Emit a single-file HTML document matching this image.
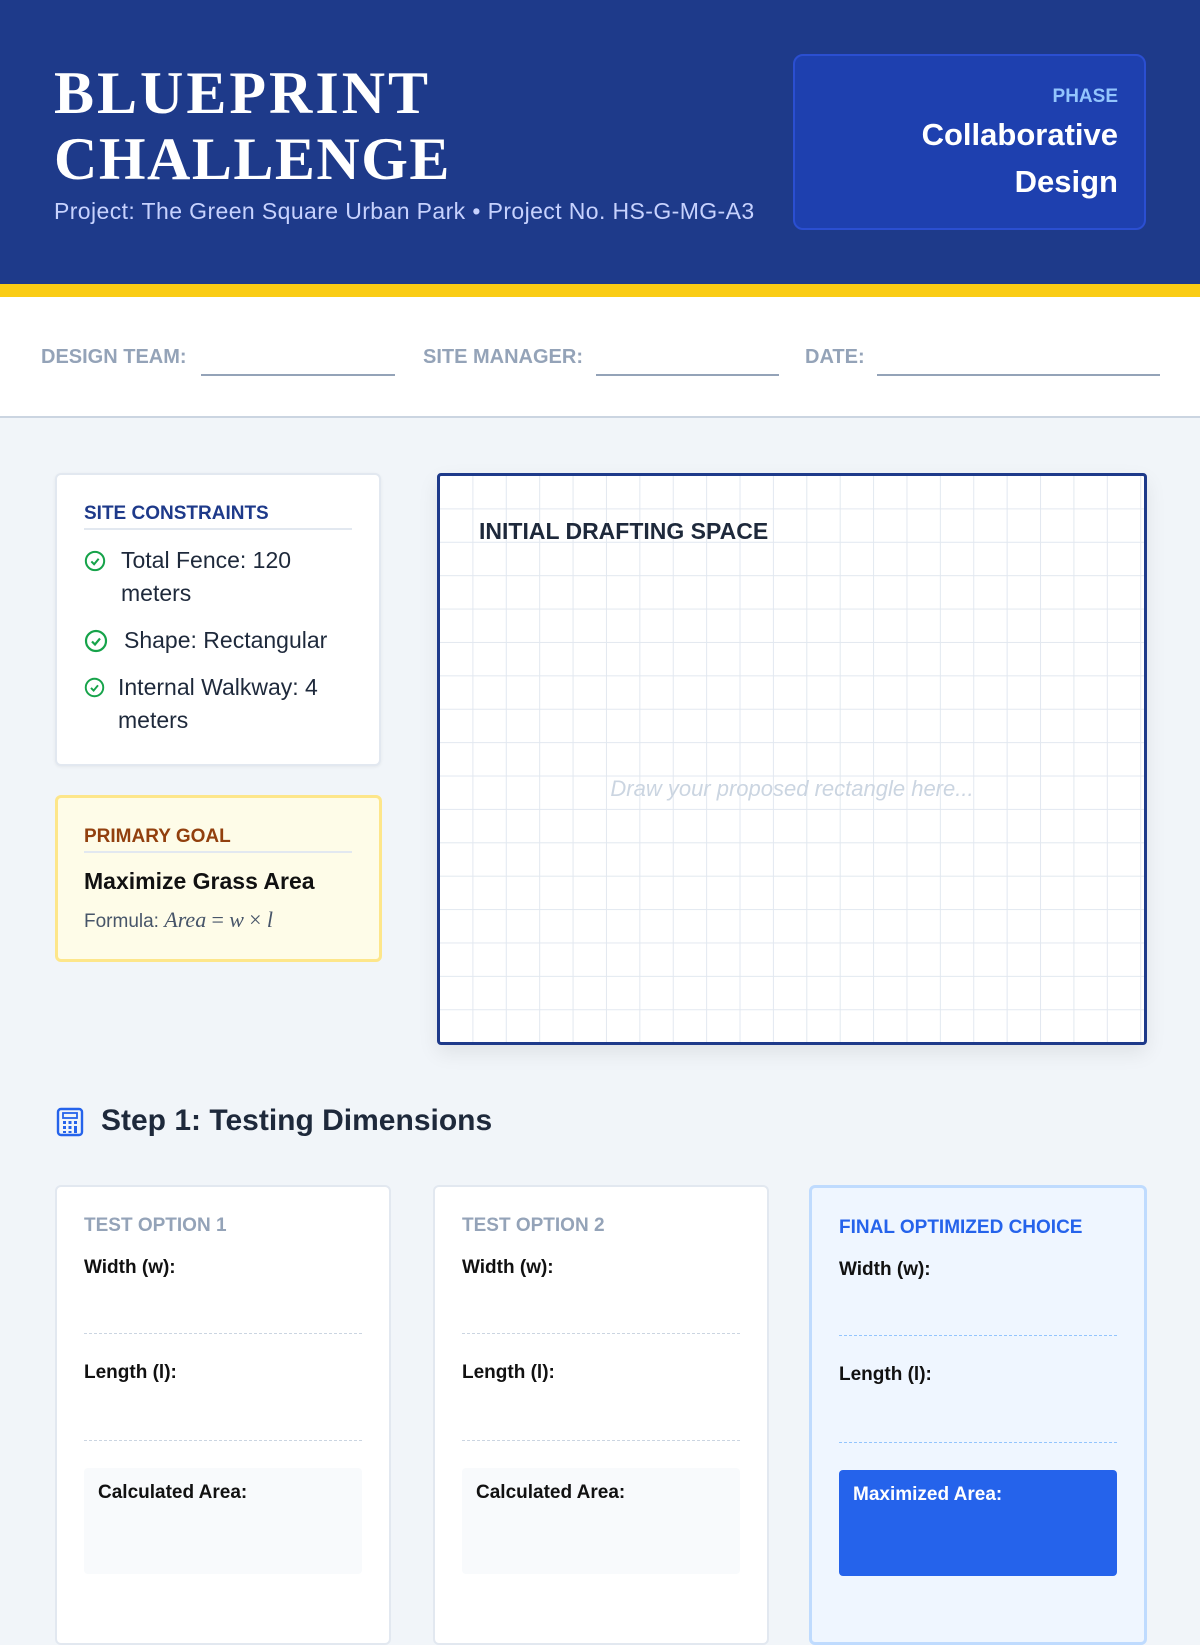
<!DOCTYPE html>
<html><head><meta charset="utf-8"><style>
*{margin:0;padding:0;box-sizing:border-box}
body{width:1200px;height:1600px;overflow:hidden;background:#f1f5f9;font-family:"Liberation Sans",sans-serif;position:relative}
.a{position:absolute}
.hdr{left:0;top:0;width:1200px;height:284px;background:#1e3a8a}
.band{left:0;top:284px;width:1200px;height:13px;background:#facc15}
.info{left:0;top:297px;width:1200px;height:121px;background:#fff;border-bottom:2px solid #cbd5e1}
.lbl{font-size:20px;font-weight:bold;color:#94a3b8;top:346px}
.ln{height:2px;background:#94a3b8;top:374px}
.card{background:#fff;border:2px solid #e2e8f0;border-radius:6px}
.h{font-size:19px;font-weight:bold}
.it{font-size:23px;color:#1e293b;line-height:33px}
.tc{width:336px;height:460px;top:1185px;background:#fff;border:2px solid #e2e8f0;border-radius:6px}
.tc .t{position:absolute;left:27px;top:28px;font-size:19px;font-weight:bold;color:#94a3b8}
.tc .w{position:absolute;left:27px;font-size:19px;font-weight:bold;color:#111}
.tc .d{position:absolute;left:27px;right:27px;border-top:1.5px dashed #cbd5e1}
.tc .box{position:absolute;left:27px;right:27px;top:281px;height:106px;background:#f8fafc;border-radius:4px;padding:14px 14px;font-size:19px;font-weight:bold;color:#111}
</style></head><body>
<div class="a hdr"></div>
<div class="a" style="left:54px;top:60px;font-family:'Liberation Serif',serif;font-weight:bold;font-size:60px;line-height:66px;letter-spacing:3px;color:#fff">BLUEPRINT<br><span style="letter-spacing:1.5px">CHALLENGE</span></div>
<div class="a" style="left:54px;top:198px;font-size:23px;letter-spacing:0.4px;color:#c7d2fe">Project: The Green Square Urban Park • Project No. HS-G-MG-A3</div>
<div class="a" style="left:793px;top:54px;width:353px;height:176px;background:#1e40af;border:2px solid #2b4fd1;border-radius:10px;text-align:right;padding:30px 26px 0 0">
<div style="font-size:19px;font-weight:bold;color:#93c5fd">PHASE</div>
<div style="font-size:31px;font-weight:bold;color:#fff;line-height:47px;margin-top:3px">Collaborative<br>Design</div>
</div>
<div class="a band"></div>
<div class="a info"></div>
<div class="a lbl" style="left:41px">DESIGN TEAM:</div><div class="a ln" style="left:201px;width:194px"></div>
<div class="a lbl" style="left:423px">SITE MANAGER:</div><div class="a ln" style="left:596px;width:183px"></div>
<div class="a lbl" style="left:805px">DATE:</div><div class="a ln" style="left:877px;width:283px"></div>

<div class="a card" style="left:55px;top:473px;width:326px;height:293px;box-shadow:0 1px 3px rgba(0,0,0,.06)"></div>
<div class="a h" style="left:84px;top:503px;color:#1e3a8a">SITE CONSTRAINTS</div>
<div class="a" style="left:84px;top:528px;width:268px;height:2px;background:#e2e8f0"></div>
<svg class="a" style="left:84px;top:550px" width="22" height="22" viewBox="0 0 24 24" fill="none" stroke="#16a34a" stroke-width="2.2"><circle cx="12" cy="12" r="10"/><path d="M8 12.5l3 3 5-6"/></svg>
<div class="a it" style="left:121px;top:544px">Total Fence: 120<br>meters</div>
<svg class="a" style="left:84px;top:629px" width="24" height="24" viewBox="0 0 24 24" fill="none" stroke="#16a34a" stroke-width="2.2"><circle cx="12" cy="12" r="10"/><path d="M8 12.5l3 3 5-6"/></svg>
<div class="a it" style="left:124px;top:624px">Shape: Rectangular</div>
<svg class="a" style="left:84px;top:677px" width="21" height="21" viewBox="0 0 24 24" fill="none" stroke="#16a34a" stroke-width="2.2"><circle cx="12" cy="12" r="10"/><path d="M8 12.5l3 3 5-6"/></svg>
<div class="a it" style="left:118px;top:671px">Internal Walkway: 4<br>meters</div>

<div class="a" style="left:55px;top:795px;width:327px;height:167px;background:#fefce8;border:3px solid #fde68a;border-radius:6px"></div>
<div class="a h" style="left:84px;top:826px;color:#92400e">PRIMARY GOAL</div>
<div class="a" style="left:84px;top:851px;width:268px;height:2px;background:#e2e8f0"></div>
<div class="a" style="left:84px;top:868px;font-size:23px;font-weight:bold;color:#111">Maximize Grass Area</div>
<div class="a" style="left:84px;top:907px;font-size:19px;color:#475569">Formula: <span style="font-family:'Liberation Serif',serif;font-style:italic;font-size:22px">Area</span> <span style="font-family:'Liberation Serif',serif;font-size:22px">=</span> <span style="font-family:'Liberation Serif',serif;font-style:italic;font-size:22px">w</span> <span style="font-family:'Liberation Serif',serif;font-size:22px">×</span> <span style="font-family:'Liberation Serif',serif;font-style:italic;font-size:22px">l</span></div>

<div class="a" style="left:437px;top:473px;width:710px;height:572px;border:3px solid #1e3a8a;border-radius:4px;background-color:#fff;background-image:linear-gradient(#e2e8f0 1px,transparent 1px),linear-gradient(90deg,#e2e8f0 1px,transparent 1px);background-size:33.4px 33.4px;background-position:-1px -1px;box-shadow:0 8px 20px rgba(0,0,0,.08)"></div>
<div class="a" style="left:479px;top:518px;font-size:23px;font-weight:bold;color:#1e293b">INITIAL DRAFTING SPACE</div>
<div class="a" style="left:437px;top:776px;width:710px;text-align:center;font-size:22px;font-style:italic;color:#cbd5e1">Draw your proposed rectangle here...</div>

<svg class="a" style="left:56px;top:1107px" width="28" height="30" viewBox="0 0 28 30" fill="none" stroke="#2563eb" stroke-width="2.4"><rect x="2" y="2" width="24" height="26" rx="3"/><rect x="7" y="6" width="14" height="5" stroke-width="1.8"/><g fill="#2563eb" stroke="none"><rect x="7" y="14" width="3" height="3"/><rect x="12.5" y="14" width="3" height="3"/><rect x="18" y="14" width="3" height="3"/><rect x="7" y="19" width="3" height="3"/><rect x="12.5" y="19" width="3" height="3"/><rect x="18" y="19" width="3" height="7"/><rect x="7" y="24" width="3" height="2"/><rect x="12.5" y="24" width="3" height="2"/></g></svg>
<div class="a" style="left:101px;top:1104px;font-size:30px;font-weight:bold;color:#1e293b">Step 1: Testing Dimensions</div>

<div class="a tc" style="left:55px"><div class="t">TEST OPTION 1</div><div class="w" style="top:70px">Width (w):</div><div class="d" style="top:146px"></div><div class="w" style="top:175px">Length (l):</div><div class="d" style="top:253px"></div><div class="box">Calculated Area:</div></div>
<div class="a tc" style="left:433px"><div class="t">TEST OPTION 2</div><div class="w" style="top:70px">Width (w):</div><div class="d" style="top:146px"></div><div class="w" style="top:175px">Length (l):</div><div class="d" style="top:253px"></div><div class="box">Calculated Area:</div></div>
<div class="a tc" style="left:809px;width:338px;background:#eff6ff;border:3px solid #bfdbfe"><div class="t" style="color:#2563eb;top:29px">FINAL OPTIMIZED CHOICE</div><div class="w" style="top:71px">Width (w):</div><div class="d" style="top:147px;border-color:#93c5fd"></div><div class="w" style="top:176px">Length (l):</div><div class="d" style="top:254px;border-color:#93c5fd"></div><div class="box" style="background:#2563eb;color:#fff;top:282px">Maximized Area:</div></div>
</body></html>
